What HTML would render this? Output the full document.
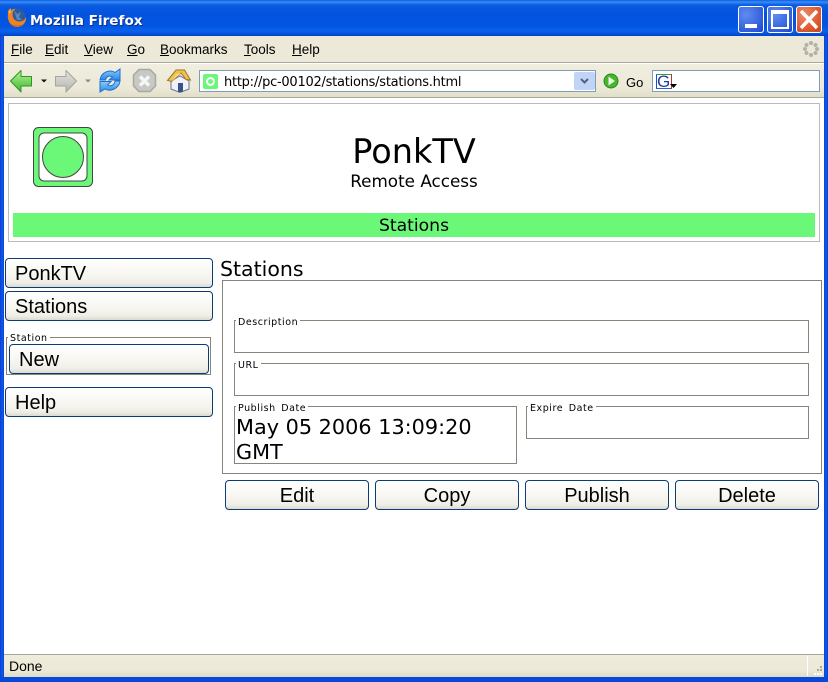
<!DOCTYPE html>
<html><head><meta charset="utf-8"><style>
html,body{margin:0;padding:0;background:#fff;overflow:hidden}
#w{position:relative;width:828px;height:682px;overflow:hidden;background:#fff;font-family:"Liberation Sans",sans-serif;color:#000}
#w div,#w span.a{position:absolute}
.t{white-space:nowrap}
.m{top:42px;font-size:13.5px;line-height:16px;white-space:nowrap;color:#000}
.m u{text-decoration:underline}
.btn{box-sizing:border-box;border:1px solid #0a3d75;border-radius:4px;background:linear-gradient(#fff 0%,#f8f7f2 50%,#efeee7 85%,#dcdad0 100%);height:30px;font-size:20px;line-height:30px;white-space:nowrap;color:#000}
.fs{box-sizing:border-box;border:1px solid #85857a}
.lg{font-family:"DejaVu Sans",sans-serif;font-size:9.5px;line-height:12px;background:#fff;padding:0 2px;white-space:nowrap;letter-spacing:.55px;word-spacing:2px}
.dj{font-family:"DejaVu Sans",sans-serif;white-space:nowrap}
</style></head><body><div id="w">
<!-- title bar -->
<div style="left:0;top:0;width:828px;height:36px;background:linear-gradient(#0a5fe6 0,#3b8cf5 2px,#0a5ce0 5px,#0353df 14px,#0355e2 26px,#0a62ec 31px,#0044c8 36px)"></div>
<div style="left:0;top:36px;width:4px;height:646px;background:linear-gradient(90deg,#0a3fd0,#0f57ea 50%,#0546d8)"></div>
<div style="left:824px;top:36px;width:4px;height:646px;background:linear-gradient(90deg,#0546d8,#0f57ea 50%,#0a3fd0)"></div>
<div style="left:0;top:677px;width:828px;height:5px;background:#0a48d8"></div>
<svg style="position:absolute;left:6px;top:7px" width="21" height="21" viewBox="0 0 21 21"><circle cx="11.5" cy="9.5" r="8" fill="#2f5b9c"/><path d="M8 3 11 7 15 5 13 10 16 13 11 13z" fill="#5a86c0"/><path d="M2 7C1.500 4 3 2 5 1L4.500 4C6 2 8 1.500 9.500 2 7 3.500 6 6.500 7 10c1 3.500 5 5.500 9 4 2-.8 3.200-2 4-4 .6 6-4 10-9.500 10C5.500 20 .8 14 2 7z" fill="#ee8420"/><path d="M4 16c3 3 8 3.500 12 1-3 3.500-9 3.500-12-1z" fill="#d0561a"/><path d="M3 7c-.5-2 .5-4 1.500-5l.2 3z" fill="#f6c840"/></svg>
<div class="t" style="left:30px;top:13px;font:bold 13.6px/17px 'DejaVu Sans',sans-serif;color:#fff;text-shadow:1px 1px 0 #0a2e90">Mozilla Firefox</div>
<!-- window buttons -->
<div style="left:738px;top:6px;box-sizing:border-box;width:26px;height:27px;border:1px solid #fff;border-radius:3px;background:radial-gradient(circle at 30% 30%,#5f8cf0,#2a56d8 80%,#1f45c4)"></div>
<div style="left:745px;top:24px;width:12px;height:4px;background:#fff"></div>
<div style="left:767px;top:6px;box-sizing:border-box;width:26px;height:27px;border:1px solid #fff;border-radius:3px;background:radial-gradient(circle at 30% 30%,#5f8cf0,#2a56d8 80%,#1f45c4)"></div>
<div style="left:771px;top:10px;box-sizing:border-box;width:18px;height:19px;border:2px solid #fff;border-top-width:4px"></div>
<div style="left:796px;top:6px;box-sizing:border-box;width:26px;height:27px;border:1px solid #fff;border-radius:3px;background:radial-gradient(circle at 30% 30%,#ee8a68,#d9542a 70%,#c4441e)"></div>
<svg style="position:absolute;left:796px;top:6px" width="26" height="27"><path d="M5 5 21 22M21 5 5 22" stroke="#fff" stroke-width="3.500"/></svg>
<!-- menu -->
<div style="left:4px;top:36px;width:820px;height:26px;background:#ece9d8"></div>
<div style="left:4px;top:62px;width:820px;height:1px;background:#aca899"></div>
<div style="left:4px;top:63px;width:820px;height:1px;background:#fff"></div>
<div class="m" style="left:11px"><u>F</u>ile</div>
<div class="m" style="left:45px"><u>E</u>dit</div>
<div class="m" style="left:84px"><u>V</u>iew</div>
<div class="m" style="left:127px"><u>G</u>o</div>
<div class="m" style="left:160px"><u>B</u>ookmarks</div>
<div class="m" style="left:244px"><u>T</u>ools</div>
<div class="m" style="left:292px"><u>H</u>elp</div>
<svg style="position:absolute;left:802px;top:40px" width="18" height="18"><g fill="#b4b2a8"><circle cx="9" cy="3" r="2"/><circle cx="13.500" cy="5" r="2"/><circle cx="15" cy="9" r="2"/><circle cx="13.500" cy="13" r="2"/><circle cx="9" cy="15" r="2"/><circle cx="4.500" cy="13" r="2"/><circle cx="3" cy="9" r="2"/><circle cx="4.500" cy="5" r="2"/></g></svg>
<!-- toolbar -->
<div style="left:4px;top:64px;width:820px;height:34px;background:linear-gradient(#f0eee0,#ece9d8 70%,#e0ddc8)"></div>
<div style="left:4px;top:97px;width:820px;height:1px;background:#aca899"></div>
<svg style="position:absolute;left:0;top:60px" width="200" height="40" viewBox="0 0 200 40">
<defs><linearGradient id="g1" x1="0" x2="0" y1="0" y2="1"><stop offset="0" stop-color="#b8f29a"/><stop offset="1" stop-color="#3fb52e"/></linearGradient><linearGradient id="g2" x1="0" x2="0" y1="0" y2="1"><stop offset="0" stop-color="#e4e4e0"/><stop offset="1" stop-color="#b4b4ae"/></linearGradient><linearGradient id="g3" x1="0" x2="0" y1="0" y2="1"><stop offset="0" stop-color="#8fd0fa"/><stop offset="1" stop-color="#2b86e4"/></linearGradient></defs>
<path d="M10.500 21 21 10.500V16.500H31.500V26H21V32Z" fill="url(#g1)" stroke="#2a9a1e" stroke-linejoin="round"/>
<path d="M41 19.500h6l-3 3z" fill="#111"/>
<path d="M76.500 21 66 10.500V16.500H55.500V26H66V32Z" fill="url(#g2)" stroke="#a4a4a0" stroke-linejoin="round"/>
<path d="M85 19.500h6l-3 3z" fill="#8a8a86"/>
<path d="M100 20C101 12 110 9 115 12.500L120 9V20H109L112.500 17C109 15 106 17 105.500 20Z" fill="url(#g3)" stroke="#1f6fd0"/>
<path d="M120 21C119 29 110 32 105 29L100 32V21.500H111L107.500 25C111 27 114.500 25 115 21Z" fill="url(#g3)" stroke="#1f6fd0"/>
<path d="M139 9.500H150L155.500 15V26L150 31.500H139L133.500 26V15Z" fill="#c8c8c4" stroke="#a8a8a4" stroke-width="1.500"/>
<path d="M140 16.500 149 25.500M149 16.500 140 25.500" stroke="#f6f6f4" stroke-width="3.500"/>
<path d="M171 21 180 16 189 21V29L180 32.500 171 29Z" fill="#f2f2f6" stroke="#6a7694"/>
<path d="M167.500 20.500 176 10H184.500L190.500 20 186 19.500 181 13 171.500 21.500Z" fill="#f0c050" stroke="#9a7a26"/>
<path d="M176 14 181 13 172 21z" fill="#f8d870"/>
<rect x="178" y="23" width="5" height="9" fill="#34558c"/>
</svg>
<!-- url bar -->
<div style="left:199px;top:70px;box-sizing:border-box;width:397px;height:22px;background:#fff;border:1px solid #7f9db9"></div>
<div style="left:203px;top:74px;width:15px;height:15px;background:#6bf777;border-radius:2px"></div>
<div style="left:206px;top:77px;box-sizing:border-box;width:9px;height:9px;background:#6bf777;border:2px solid #fff;border-radius:50%"></div>
<div class="t" style="left:224px;top:74px;font:13px/17px 'DejaVu Sans',sans-serif;letter-spacing:-.25px">http://pc-00102/stations/stations.html</div>
<div style="left:574px;top:72px;width:21px;height:18px;background:#c2d4f6;border-radius:2px"></div>
<svg style="position:absolute;left:574px;top:72px" width="21" height="18"><path d="M7 7 10.500 10.500 14 7" fill="none" stroke="#4d6185" stroke-width="2"/></svg>
<svg style="position:absolute;left:603px;top:73px" width="16" height="16"><circle cx="8" cy="8" r="7" fill="#47b52e" stroke="#2a8a1a"/><path d="M5.500 3.500 12 8 5.500 12.500Z" fill="#e8fbe0"/></svg>
<div class="t" style="left:626px;top:75px;font-size:13px;line-height:15px">Go</div>
<div style="left:652px;top:70px;box-sizing:border-box;width:168px;height:22px;background:#fff;border:1px solid #7f9db9"></div>
<div style="left:656px;top:74px;box-sizing:border-box;width:16px;height:15px;background:#fff;border:1px solid;border-color:#3a9a3a #c03028 #3060c0 #2050c0"></div>
<div class="t" style="left:657px;top:72px;font:17px/19px 'Liberation Sans',sans-serif;color:#2040a8">G</div>
<svg style="position:absolute;left:670px;top:84px" width="8" height="5"><path d="M0 0H7L3.500 4Z" fill="#000"/></svg>
<!-- header -->
<div style="left:8px;top:103px;box-sizing:border-box;width:812px;height:139px;border:1px solid #bbb"></div>
<svg style="position:absolute;left:33px;top:127px" width="60" height="60"><rect x=".5" y=".5" width="59" height="59" rx="5" fill="#6bf777" stroke="#444"/><rect x="6" y="6" width="48" height="48" rx="5" fill="#fff" stroke="#444"/><circle cx="30" cy="30" r="20.500" fill="#6bf777" stroke="#444"/></svg>
<div class="dj" style="left:8px;width:812px;top:130px;font-size:33.500px;line-height:43px;text-align:center">PonkTV</div>
<div class="dj" style="left:8px;width:812px;top:171px;font-size:16.800px;line-height:20px;text-align:center">Remote Access</div>
<div style="left:13px;top:213px;width:802px;height:24px;background:#6bf777"></div>
<div class="dj" style="left:13px;width:802px;top:216px;font-size:17.200px;line-height:21px;text-align:center">Stations</div>
<!-- sidebar -->
<div class="btn" style="left:5px;top:258px;width:208px;padding-left:9px">PonkTV</div>
<div class="btn" style="left:5px;top:291px;width:208px;padding-left:9px">Stations</div>
<div class="fs" style="left:6px;top:337px;width:205px;height:38px"></div>
<div class="lg" style="left:8px;top:333px">Station</div>
<div class="btn" style="left:9px;top:344px;width:200px;padding-left:9px">New</div>
<div class="btn" style="left:5px;top:387px;width:208px;padding-left:9px">Help</div>
<!-- main -->
<div class="dj" style="left:220px;top:257px;font-size:20.500px;line-height:24px">Stations</div>
<div class="fs" style="left:222px;top:280px;width:600px;height:194px"></div>
<div class="fs" style="left:234px;top:320px;width:575px;height:33px"></div>
<div class="lg" style="left:236px;top:317px">Description</div>
<div class="fs" style="left:234px;top:363px;width:575px;height:33px"></div>
<div class="lg" style="left:236px;top:360px">URL</div>
<div class="fs" style="left:234px;top:406px;width:283px;height:58px"></div>
<div class="lg" style="left:236px;top:403px">Publish Date</div>
<div class="dj" style="left:236px;top:415px;width:270px;font-size:20.800px;line-height:25px">May 05 2006 13:09:20<br>GMT</div>
<div class="fs" style="left:526px;top:406px;width:283px;height:33px"></div>
<div class="lg" style="left:528px;top:403px">Expire Date</div>
<div class="btn" style="left:225px;top:480px;width:144px;text-align:center">Edit</div>
<div class="btn" style="left:375px;top:480px;width:144px;text-align:center">Copy</div>
<div class="btn" style="left:525px;top:480px;width:144px;text-align:center">Publish</div>
<div class="btn" style="left:675px;top:480px;width:144px;text-align:center">Delete</div>
<!-- status -->
<div style="left:4px;top:654px;width:820px;height:1px;background:#aca899"></div>
<div style="left:4px;top:655px;width:820px;height:22px;background:linear-gradient(#efecdc,#ece9d8 70%,#dedbc6)"></div>
<div class="t" style="left:9px;top:658px;font-size:14px;line-height:17px">Done</div>
<div style="left:807px;top:656px;width:1px;height:20px;background:#fff"></div>
<svg style="position:absolute;left:811px;top:664px" width="13" height="13"><g fill="#fff"><rect x="9" y="2" width="2" height="2" fill="#aca899"/><rect x="6" y="5" width="2" height="2" fill="#aca899"/><rect x="9" y="5" width="2" height="2" fill="#aca899"/><rect x="3" y="9" width="2" height="2"/><rect x="6" y="9" width="2" height="2"/><rect x="9" y="9" width="2" height="2"/></g></svg>
</div></body></html>
